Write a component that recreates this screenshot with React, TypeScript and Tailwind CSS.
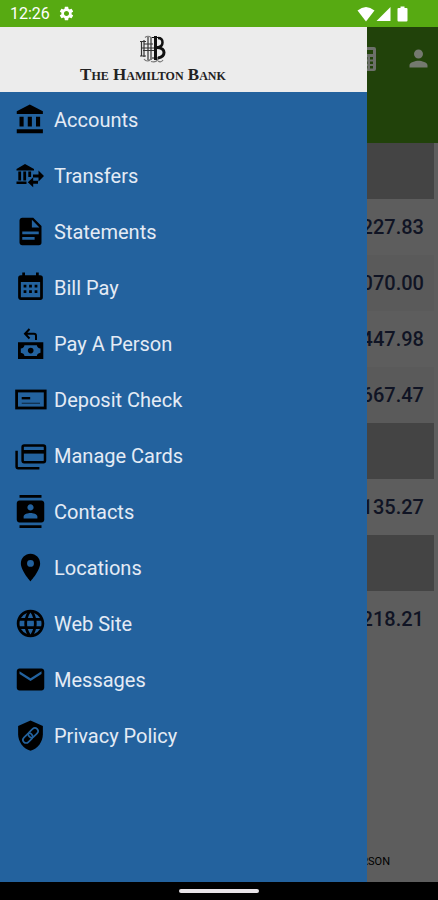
import React from 'react';
import { MdContacts, MdEmail, MdLanguage, MdLocationOn, MdPerson, MdSettings } from 'react-icons/md';

const BankIcon = () => (
  <svg width="33" height="33" viewBox="0 0 24 24" fill="currentColor">
    <path d="M11.5,1L2,6V8H21V6M16,10V17H19V10M2,22H21V19H2V22M10,10V17H13V10M4,10V17H7V10H4Z" />
  </svg>
);

const TransferIcon = () => (
  <svg width="33" height="33" viewBox="0 0 33 33" fill="currentColor">
    <path d="M11 5 L20 10 V11.5 H2.5 V10 Z" />
    <path d="M4.3 12.5h2.8v9H4.3zM9.3 12.5h2.8v9H9.3zM14.3 12.5h2.8v5.5h-2.8zM2.5 22.5h10V25h-10z" />
    <path d="M19 15.5h5.5V11.5l5.5 5.5-5.5 5.5v-4H19z" />
    <path d="M24 21.8h-4.8v-3.5L13.8 23.3l5.4 5v-3.5H24z" />
  </svg>
);

const StatementIcon = () => (
  <svg width="33" height="33" viewBox="0 0 24 24" fill="currentColor">
    <path d="M13,9H18.5L13,3.5V9M6,2H14L20,8V20A2,2 0 0,1 18,22H6C4.89,22 4,21.1 4,20V4C4,2.89 4.89,2 6,2M15,18V16H6V18H15M18,14V12H6V14H18Z" />
  </svg>
);

const CalendarIcon = () => (
  <svg width="33" height="33" viewBox="0 0 24 24" fill="currentColor">
    <path d="M9,10V12H7V10H9M13,10V12H11V10H13M17,10V12H15V10H17M19,3A2,2 0 0,1 21,5V19A2,2 0 0,1 19,21H5C3.89,21 3,20.1 3,19V5A2,2 0 0,1 5,3H6V1H8V3H16V1H18V3H19M19,19V8H5V19H19M9,14V16H7V14H9M13,14V16H11V14H13M17,14V16H15V14H17Z" />
  </svg>
);

const PayPersonIcon = () => (
  <svg width="33" height="33" viewBox="0 0 33 33" fill="currentColor">
    <path d="M15.5 2 L11 6.8 L15.5 11.5 M11.3 6.8 H20 Q22 6.8 22 8.8 V13" fill="none" stroke="currentColor" strokeWidth="2" />
    <path
      fillRule="evenodd"
      d="M4 15.3H29.3V32H4Z M10.5 18.2 Q10 21 6.8 21.5 V25.8 Q10 26.3 10.5 29.1 H22.8 Q23.3 26.3 26.5 25.8 V21.5 Q23.3 21 22.8 18.2 Z"
    />
    <circle cx="16.7" cy="23.6" r="2.8" />
  </svg>
);

const CheckIcon = () => (
  <svg width="33" height="33" viewBox="0 0 33 33" fill="none" stroke="currentColor">
    <rect x="2.6" y="8" width="28.6" height="17" strokeWidth="2.8" />
    <path d="M7.7 15.2H16.2" strokeWidth="2.4" />
    <path d="M7.7 20.3H26" strokeWidth="1.3" opacity="0.5" />
  </svg>
);

const CardsIcon = () => (
  <svg width="33" height="33" viewBox="0 0 33 33" fill="none" stroke="currentColor" strokeWidth="2.5">
    <rect x="8.6" y="6.6" width="22.4" height="16.6" rx="1.6" />
    <path d="M8.6 12.8H31" strokeWidth="3.6" />
    <path d="M2.6 11.7V27.6Q2.6 29.2 4.2 29.2H25.4" />
  </svg>
);

const PrivacyIcon = () => (
  <svg width="33" height="33" viewBox="0 0 24 24">
    <path d="M12,1L3,5V11C3,16.55 6.84,21.74 12,23C17.16,21.74 21,16.55 21,11V5L12,1Z" fill="currentColor" />
    <g transform="rotate(-45 12 12)" fill="none" stroke="#23629e" strokeWidth="1.2">
      <rect x="5.2" y="9.7" width="8" height="4.6" rx="2.3" />
      <rect x="10.8" y="9.7" width="8" height="4.6" rx="2.3" />
    </g>
  </svg>
);

const CalculatorIcon = () => (
  <svg width="24" height="24" viewBox="0 0 24 24" fill="#6c706a">
    <path
      fillRule="evenodd"
      d="M5 0H21Q23 0 23 2V22Q23 24 21 24H5Q3 24 3 22V2Q3 0 5 0Z M6 3V7H20V3Z M6 10V12.5H9V10Z M11.5 10V12.5H14.5V10Z M17 10V12.5H20V10Z M6 14.5V17H9V14.5Z M11.5 14.5V17H14.5V14.5Z M17 14.5V17H20V14.5Z M6 19V21.5H9V19Z M11.5 19V21.5H14.5V19Z M17 19V21.5H20V19Z"
    />
  </svg>
);

// Interlaced bank emblem
const Monogram = () => (
  <svg width="28" height="28" viewBox="0 0 28 28" fill="none" stroke="#111">
    <g strokeWidth="1.2" stroke="#333">
      <path d="M2.5 6V21M5 5V22M9 2V25M12 2V25" />
      <path d="M1 6.5H7M1 21H7M2 13H20M4 15.5H18M5 9H14" />
      <path d="M6 2.5Q9 0 12 2.5M5 24Q8 28 12 24M12 26.5Q17 28 19 24M19 26Q22 28 24 25" stroke="#777" />
    </g>
    <path d="M16.5 1V25" strokeWidth="3" />
    <path d="M13 2.5H20M13 23H20" strokeWidth="1.2" />
    <path d="M19 3Q23.5 3 23.5 7.5Q23.5 12 18 12.5" strokeWidth="2.5" />
    <path d="M18 12.5Q25 13 25 17.5Q25 22 19 23" strokeWidth="3" />
  </svg>
);

const MENU = [
  { label: 'Accounts', icon: <BankIcon /> },
  { label: 'Transfers', icon: <TransferIcon /> },
  { label: 'Statements', icon: <StatementIcon /> },
  { label: 'Bill Pay', icon: <CalendarIcon /> },
  { label: 'Pay A Person', icon: <PayPersonIcon /> },
  { label: 'Deposit Check', icon: <CheckIcon /> },
  { label: 'Manage Cards', icon: <CardsIcon /> },
  { label: 'Contacts', icon: <MdContacts size={33} /> },
  { label: 'Locations', icon: <MdLocationOn size={33} /> },
  { label: 'Web Site', icon: <MdLanguage size={33} /> },
  { label: 'Messages', icon: <MdEmail size={33} /> },
  { label: 'Privacy Policy', icon: <PrivacyIcon /> },
];

const ACCOUNT_GROUPS = [
  ['227.83', '070.00', '447.98', '667.47'],
  ['135.27'],
  ['218.21'],
];

const StatusBar = () => (
  <div className="flex h-[27px] items-center justify-between bg-[#57aa12] pr-[30px] pl-[10px] text-white">
    <div className="flex items-center gap-2">
      <span className="text-base">12:26</span>
      <MdSettings size={17} />
    </div>
    <div className="flex items-center gap-px">
      <svg width="18" height="16" viewBox="0 0 18 16" fill="currentColor">
        <path d="M9 15.5L0.5 4.5Q9-2.5 17.5 4.5Z" />
      </svg>
      <svg width="15" height="16" viewBox="0 0 15 16" fill="currentColor">
        <path d="M14.5 1V15H0.5Z" />
      </svg>
      <svg width="16" height="16" viewBox="0 0 16 16" fill="currentColor">
        <path d="M8.5 0.5H12.5V2H14.5Q15.5 2 15.5 3V14.5Q15.5 15.5 14.5 15.5H6.5Q5.5 15.5 5.5 14.5V3Q5.5 2 6.5 2H8.5Z" />
      </svg>
    </div>
  </div>
);

const AccountsPage = () => (
  <div className="flex flex-1 flex-col bg-[#5d5d5d]">
    <header className="flex h-[116px] items-start justify-end gap-7 bg-[#21420a] pt-[18px] pr-[6px]">
      <button aria-label="Calculator" className="pt-[2px]">
        <CalculatorIcon />
      </button>
      <button aria-label="Profile">
        <MdPerson size={27} color="#74796f" />
      </button>
    </header>
    <div className="flex-1 pr-1">
      {ACCOUNT_GROUPS.map((amounts, i) => (
        <section key={i}>
          <div className="h-14 bg-[#444444]" />
          {amounts.map(amount => (
            <div
              key={amount}
              className="flex h-14 items-center justify-end pr-[10px] text-xl font-medium text-[#101424] odd:bg-[#5a5a5a]"
            >
              {amount}
            </div>
          ))}
        </section>
      ))}
    </div>
    <footer className="flex h-10 items-center justify-end pr-12 text-[11px] text-black">PERSON</footer>
  </div>
);

const Drawer = () => (
  <aside className="absolute inset-y-0 left-0 w-[calc(100%-71px)] bg-[#23629e]">
    <div className="flex h-[65px] flex-col items-center bg-[#ececec] pt-2 pr-[61px]">
      <Monogram />
      <span className="font-['Liberation_Serif',serif] text-[17px] leading-6 font-bold whitespace-nowrap text-[#222] [font-variant-caps:small-caps]">
        The Hamilton Bank
      </span>
    </div>
    <nav>
      {MENU.map(({ label, icon }) => (
        <a key={label} href="#" className="flex h-14 items-center gap-[7px] pl-[14px] text-xl text-[#e4ebf5]">
          <span className="h-[34px] w-[33px] text-black">{icon}</span>
          {label}
        </a>
      ))}
    </nav>
  </aside>
);

export default function App() {
  return (
    <div className="flex min-h-screen flex-col font-[Roboto,sans-serif]">
      <StatusBar />
      <main className="relative flex flex-1 flex-col">
        <AccountsPage />
        <Drawer />
      </main>
      <div className="flex h-[18px] items-center justify-center bg-black">
        <div className="h-1 w-20 rounded-full bg-[#e8e4e8]" />
      </div>
    </div>
  );
}
